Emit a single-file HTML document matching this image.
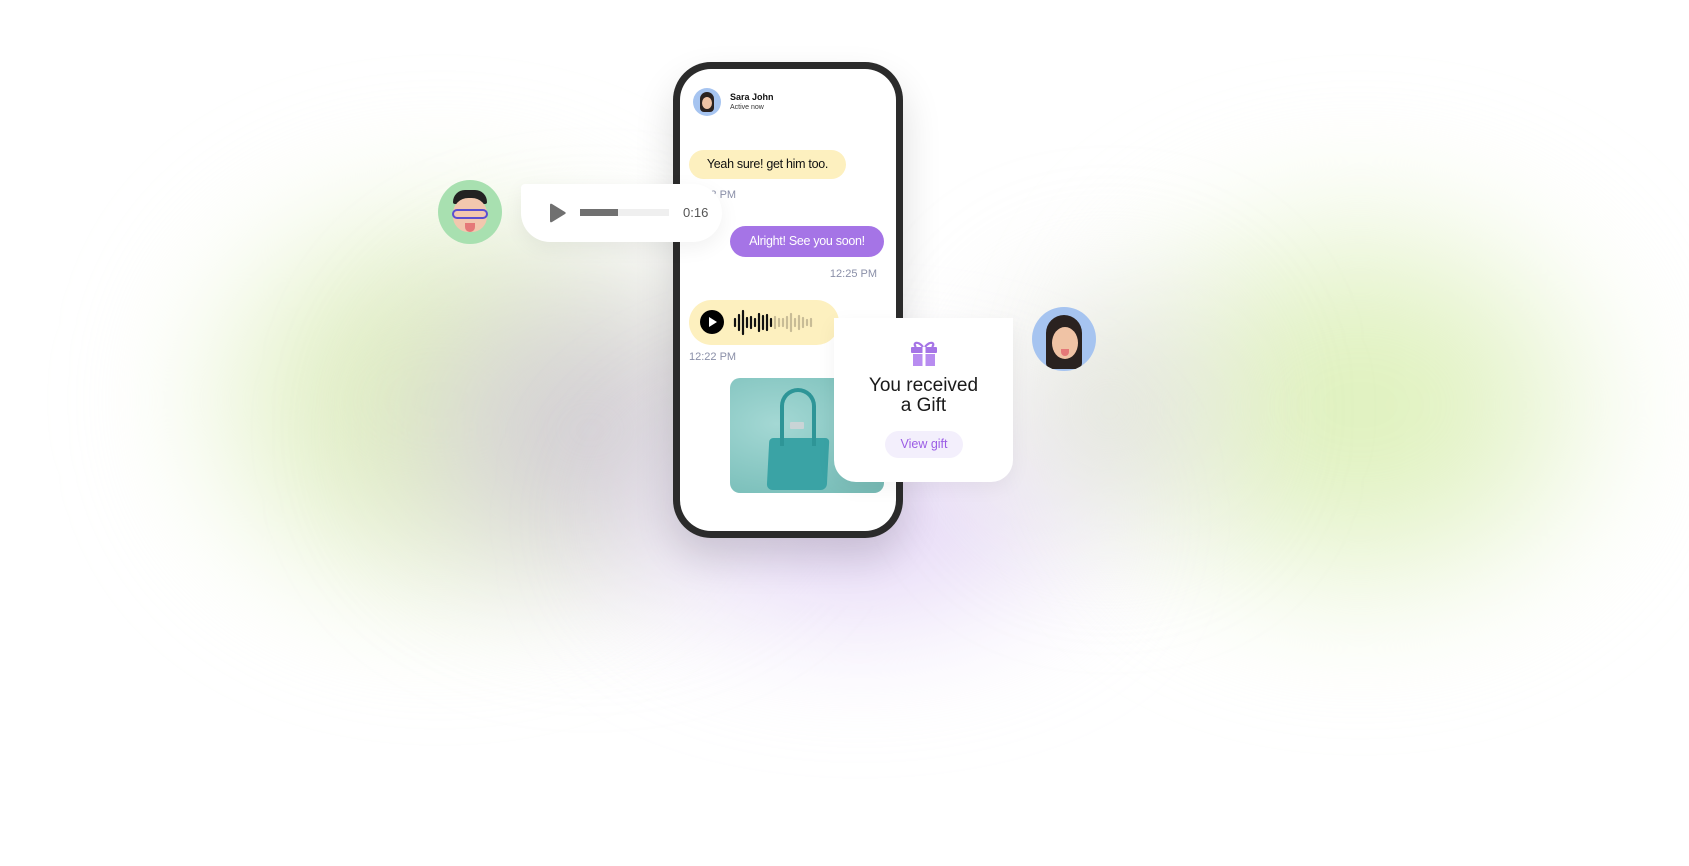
<!DOCTYPE html>
<html><head><meta charset="utf-8"><style>
*{margin:0;padding:0;box-sizing:border-box}
body{width:1689px;height:866px;overflow:hidden;background:#fff;position:relative;font-family:"Liberation Sans",sans-serif}
.blob{position:absolute;border-radius:50%;filter:blur(60px)}
.abs{position:absolute}
</style></head><body>
<div class="blob" style="left:160px;top:170px;width:560px;height:460px;background:radial-gradient(closest-side,#d8ebb0,#e8f3d2 60%,rgba(255,255,255,0))"></div>
<div class="blob" style="left:1070px;top:170px;width:580px;height:470px;background:radial-gradient(closest-side,#daf0b0,#eaf5d6 60%,rgba(255,255,255,0))"></div>
<div class="blob" style="left:360px;top:240px;width:460px;height:380px;background:radial-gradient(closest-side,#c9c3cd,rgba(220,214,224,.7) 60%,rgba(255,255,255,0))"></div>
<div class="blob" style="left:590px;top:380px;width:540px;height:280px;background:radial-gradient(closest-side,#dcc9f2,rgba(232,220,248,.7) 60%,rgba(255,255,255,0))"></div>
<div class="blob" style="left:950px;top:250px;width:320px;height:320px;background:radial-gradient(closest-side,#dcdcd6,rgba(255,255,255,0))"></div>

<!-- phone -->
<div class="abs" style="left:673px;top:62px;width:230px;height:476px;background:#2b2b2b;border-radius:38px;box-shadow:0 20px 40px rgba(0,0,0,.14)"></div>
<div class="abs" style="left:680px;top:69px;width:216px;height:462px;background:#fff;border-radius:31px"></div>

<div class="abs" style="left:693px;top:88px;width:28px;height:28px;border-radius:50%;background:#a6c4f0;overflow:hidden"><div style="position:absolute;left:7px;top:4px;width:14px;height:20px;border-radius:7px 7px 4px 4px;background:#2a2220"></div><div style="position:absolute;left:9px;top:9px;width:10px;height:12px;border-radius:50%;background:#f0c3a5"></div></div>
<div class="abs" style="left:730px;top:92px;font-size:9px;font-weight:bold;color:#111">Sara John</div>
<div class="abs" style="left:730px;top:104px;font-size:7px;color:#333">Active now</div>

<div class="abs" style="left:689px;top:150px;width:157px;height:29px;background:#fdf0bf;border-radius:15px;font-size:12.5px;color:#111;line-height:29px;text-align:center;letter-spacing:-.3px">Yeah sure! get him too.</div>
<div class="abs" style="left:689px;top:189px;font-size:11px;color:#8a8fa8">12:22 PM</div>

<div class="abs" style="left:730px;top:226px;width:154px;height:31px;background:#a574e6;border-radius:16px;font-size:12.5px;color:#fff;line-height:31px;text-align:center;letter-spacing:-.3px">Alright! See you soon!</div>
<div class="abs" style="left:780px;top:268px;width:97px;text-align:right;font-size:11px;color:#8a8fa8">12:25 PM</div>

<div class="abs" style="left:689px;top:300px;width:150px;height:45px;background:#fdf0bf;border-radius:23px"></div>
<div class="abs" style="left:700px;top:310px;width:24px;height:24px;border-radius:50%;background:#000"></div>
<svg class="abs" style="left:733px;top:309px" width="94" height="27">
<g stroke-linecap="round" stroke-width="2.2">
<g stroke="#111"><line x1="2" y1="10" x2="2" y2="17"/><line x1="6" y1="6" x2="6" y2="21"/><line x1="10" y1="2" x2="10" y2="25"/><line x1="14" y1="9" x2="14" y2="18"/><line x1="18" y1="8" x2="18" y2="19"/><line x1="22" y1="10" x2="22" y2="17"/><line x1="26" y1="5" x2="26" y2="22"/><line x1="30" y1="7" x2="30" y2="20"/><line x1="34" y1="6" x2="34" y2="21"/><line x1="38" y1="10" x2="38" y2="17"/></g>
<g stroke="#c8bc96"><line x1="42" y1="8" x2="42" y2="19"/><line x1="46" y1="10" x2="46" y2="17"/><line x1="50" y1="10" x2="50" y2="17"/><line x1="54" y1="8" x2="54" y2="19"/><line x1="58" y1="5" x2="58" y2="22"/><line x1="62" y1="10" x2="62" y2="17"/><line x1="66" y1="7" x2="66" y2="20"/><line x1="70" y1="9" x2="70" y2="18"/><line x1="74" y1="11" x2="74" y2="16"/><line x1="78" y1="10" x2="78" y2="17"/></g></g></svg>
<svg class="abs" style="left:700px;top:310px" width="24" height="24"><path d="M9 7 L17 12 L9 17Z" fill="#fff"/></svg>
<div class="abs" style="left:689px;top:351px;font-size:11px;color:#8a8fa8">12:22 PM</div>

<div class="abs" style="left:730px;top:378px;width:154px;height:115px;border-radius:10px;background:radial-gradient(ellipse at 30% 40%,#a4d8d4,#7fc2bd 70%,#76b8b3);overflow:hidden">
<div style="position:absolute;left:38px;top:60px;width:60px;height:52px;background:#3aa3a5;border-radius:4px 4px 6px 6px;transform:skewX(-3deg)"></div>
<div style="position:absolute;left:50px;top:10px;width:36px;height:58px;border:4px solid #2e9597;border-bottom:none;border-radius:18px 18px 0 0"></div>
<div style="position:absolute;left:60px;top:44px;width:14px;height:7px;background:#c9d4d6;border-radius:1px"></div>
</div>

<!-- audio card -->
<div class="abs" style="left:521px;top:184px;width:201px;height:58px;background:#fff;border-radius:4px 29px 29px 29px;box-shadow:0 6px 20px rgba(0,0,0,.06)"></div>
<svg class="abs" style="left:548px;top:203px" width="20" height="20"><path d="M2 2 Q2 0 4 1 L17 9 Q18.5 10 17 11 L4 19 Q2 20 2 18Z" fill="#707070"/></svg>
<div class="abs" style="left:580px;top:209px;width:89px;height:7px;background:#efefef"></div>
<div class="abs" style="left:580px;top:209px;width:38px;height:7px;background:#707070"></div>
<div class="abs" style="left:683px;top:205px;font-size:13px;color:#555">0:16</div>

<div class="abs" style="left:438px;top:180px;width:64px;height:64px;border-radius:50%;background:#a8e0b0;overflow:hidden"><div style="position:absolute;left:15px;top:10px;width:34px;height:14px;background:#222;border-radius:12px 12px 2px 2px"></div><div style="position:absolute;left:15px;top:18px;width:34px;height:34px;border-radius:45%;background:#f2c7ae"></div><div style="position:absolute;left:14px;top:29px;width:36px;height:10px;border:2px solid #5b4fd0;border-radius:6px"></div><div style="position:absolute;left:27px;top:43px;width:10px;height:9px;background:#e57878;border-radius:0 0 5px 5px"></div></div>

<!-- gift card -->
<div class="abs" style="left:834px;top:318px;width:179px;height:164px;background:#fff;border-radius:0 0 22px 22px;box-shadow:0 6px 20px rgba(0,0,0,.05)"></div>
<svg class="abs" style="left:910px;top:339px" width="28" height="28" viewBox="0 0 28 28"><path d="M13 8 C8 1 2 4 6 8 M15 8 C20 1 26 4 22 8" stroke="#a574e6" stroke-width="2.2" fill="none"/><rect x="1" y="8" width="26" height="6" rx="1" fill="#a574e6"/><rect x="3" y="15" width="22" height="12" fill="#b88cf0"/><rect x="12.5" y="8" width="3" height="19" fill="#fff"/></svg>
<div class="abs" style="left:834px;top:376px;width:179px;text-align:center;font-size:19px;line-height:20px;color:#1a1a1a">You received<br>a Gift</div>
<div class="abs" style="left:885px;top:431px;width:78px;height:27px;background:#f3effc;border-radius:14px;text-align:center;line-height:27px;font-size:12.5px;color:#9b5de5">View gift</div>

<div class="abs" style="left:1032px;top:307px;width:64px;height:64px;border-radius:50%;background:#a6c4f0;overflow:hidden"><div style="position:absolute;left:14px;top:8px;width:36px;height:54px;border-radius:18px 18px 6px 6px;background:#2a2220"></div><div style="position:absolute;left:20px;top:20px;width:26px;height:32px;border-radius:50%;background:#f0c3a5"></div><div style="position:absolute;left:29px;top:42px;width:8px;height:7px;background:#e57878;border-radius:0 0 4px 4px"></div></div>
</body></html>
